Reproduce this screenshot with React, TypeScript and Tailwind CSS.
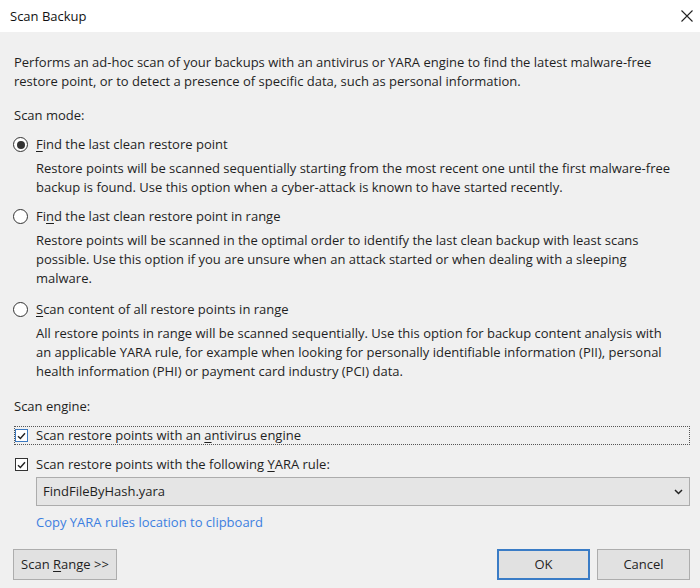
import React from 'react';

function Radio({ checked }: { checked?: boolean }) {
    return (
        <span className="w-[15px] h-[15px] rounded-full border border-[#333] bg-white flex items-center justify-center shrink-0">
            {checked && <span className="w-[8px] h-[8px] rounded-full bg-[#333]" />}
        </span>
    );
}

function Checkbox({ focused }: { focused?: boolean }) {
    return (
        <span className={"w-[13px] h-[13px] border bg-white flex items-center justify-center shrink-0 " + (focused ? "border-[#3a78c0]" : "border-[#333]")}>
            <svg width="9" height="8" viewBox="0 0 9 8">
                <path d="M1 4.2 L3.4 6.5 L8 1.2" fill="none" stroke="#222" strokeWidth="1.4" />
            </svg>
        </span>
    );
}

const u = "underline underline-offset-2 decoration-1";

export default function App() {
    return (
        <div className="w-[700px] h-[588px] flex flex-col text-[13px] leading-[19px] text-[#1f1f1f] whitespace-nowrap" style={{ fontFamily: '"Open Sans", "Noto Sans", sans-serif' }}>
            <div className="h-8 bg-white flex items-center justify-between pl-[10px] pr-[7px] shrink-0">
                <span className="text-[#111]">Scan Backup</span>
                <svg width="12" height="12" viewBox="0 0 12 12">
                    <path d="M0.5 0.5 L11.5 11.5 M11.5 0.5 L0.5 11.5" stroke="#222" strokeWidth="1.1" />
                </svg>
            </div>

            <div className="flex-1 bg-[#f0f0f0] pl-[14px] pr-[10px] pt-[21px] flex flex-col">
                <p>
                    Performs an ad-hoc scan of your backups with an antivirus or YARA engine to find the latest malware-free<br />
                    restore point, or to detect a presence of specific data, such as personal information.
                </p>

                <p className="mt-[15px]">Scan mode:</p>

                <div className="mt-[10px] flex items-center -ml-px">
                    <Radio checked />
                    <span className="ml-[8px]"><span className={u}>F</span>ind the last clean restore point</span>
                </div>
                <p className="mt-[5px] pl-[22px]">
                    Restore points will be scanned sequentially starting from the most recent one until the first malware-free<br />
                    backup is found. Use this option when a cyber-attack is known to have started recently.
                </p>

                <div className="mt-[10px] flex items-center -ml-px">
                    <Radio />
                    <span className="ml-[8px]">Fi<span className={u}>n</span>d the last clean restore point in range</span>
                </div>
                <p className="mt-[5px] pl-[22px]">
                    Restore points will be scanned in the optimal order to identify the last clean backup with least scans<br />
                    possible. Use this option if you are unsure when an attack started or when dealing with a sleeping<br />
                    malware.
                </p>

                <div className="mt-[12px] flex items-center -ml-px">
                    <Radio />
                    <span className="ml-[8px]"><span className={u}>S</span>can content of all restore points in range</span>
                </div>
                <p className="mt-[5px] pl-[22px]">
                    All restore points in range will be scanned sequentially. Use this option for backup content analysis with<br />
                    an applicable YARA rule, for example when looking for personally identifiable information (PII), personal<br />
                    health information (PHI) or payment card industry (PCI) data.
                </p>

                <p className="mt-[16px]">Scan engine:</p>

                <div className="mt-[10px] h-[19px] flex items-center border border-dotted border-[#555]">
                    <Checkbox focused />
                    <span className="ml-[8px]">Scan restore points with an <span className={u}>a</span>ntivirus engine</span>
                </div>

                <div className="mt-[10px] h-[19px] flex items-center pl-px">
                    <Checkbox />
                    <span className="ml-[8px]">Scan restore points with the following <span className={u}>Y</span>ARA rule:</span>
                </div>

                <div className="mt-[3px] ml-[22px] h-[29px] bg-[#e5e5e5] border border-[#acacac] flex items-center justify-between pl-[6px] pr-[6px]">
                    <span>FindFileByHash.yara</span>
                    <svg width="9" height="6" viewBox="0 0 9 6">
                        <path d="M1 1 L4.5 4.5 L8 1" fill="none" stroke="#222" strokeWidth="1.5" />
                    </svg>
                </div>

                <a className="mt-[7px] ml-[22px] text-[#3d7fe0] self-start">Copy YARA rules location to clipboard</a>

                <div className="mt-[17px] flex items-center -ml-px">
                    <button className="w-[104px] h-[31px] bg-[#e1e1e1] border border-[#adadad]">
                        Scan <span className={u}>R</span>ange &gt;&gt;
                    </button>
                    <div className="ml-auto flex gap-[7px]">
                        <button className="w-[93px] h-[31px] bg-[#e1e1e1] border-2 border-[#3a7cc6]">OK</button>
                        <button className="w-[93px] h-[31px] bg-[#e1e1e1] border border-[#adadad]">Cancel</button>
                    </div>
                </div>
            </div>
        </div>
    );
}
